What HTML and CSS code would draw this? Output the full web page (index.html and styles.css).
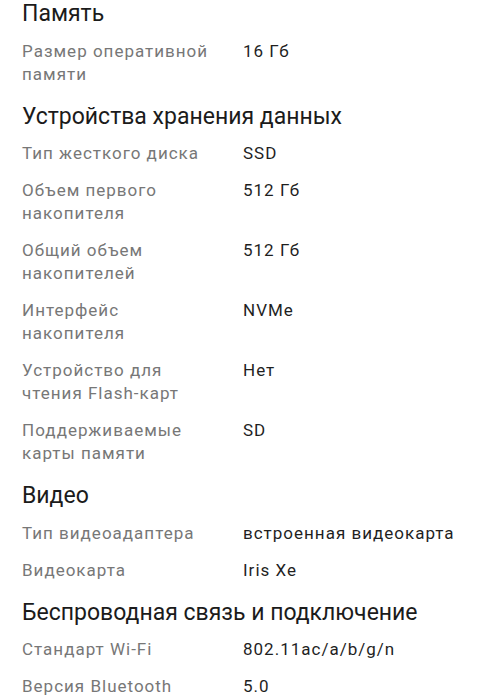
FILE: index.html
```html
<!DOCTYPE html>
<html lang="ru">
<head>
<meta charset="utf-8">
<link rel="stylesheet" href="styles.css">
</head>
<body>
<main class="specs">
  <section class="group">
    <h2 class="group-title">Память</h2>
    <dl class="rows">
      <div class="row"><dt>Размер оперативной памяти</dt><dd>16 Гб</dd></div>
    </dl>
  </section>
  <section class="group">
    <h2 class="group-title">Устройства хранения данных</h2>
    <dl class="rows">
      <div class="row"><dt>Тип жесткого диска</dt><dd>SSD</dd></div>
      <div class="row"><dt>Объем первого накопителя</dt><dd>512 Гб</dd></div>
      <div class="row"><dt>Общий объем накопителей</dt><dd>512 Гб</dd></div>
      <div class="row"><dt>Интерфейс накопителя</dt><dd>NVMe</dd></div>
      <div class="row"><dt>Устройство для чтения Flash-карт</dt><dd>Нет</dd></div>
      <div class="row"><dt>Поддерживаемые карты памяти</dt><dd>SD</dd></div>
    </dl>
  </section>
  <section class="group">
    <h2 class="group-title">Видео</h2>
    <dl class="rows">
      <div class="row"><dt>Тип видеоадаптера</dt><dd>встроенная видеокарта</dd></div>
      <div class="row"><dt>Видеокарта</dt><dd>Iris Xe</dd></div>
    </dl>
  </section>
  <section class="group">
    <h2 class="group-title">Беспроводная связь и подключение</h2>
    <dl class="rows">
      <div class="row"><dt>Стандарт Wi-Fi</dt><dd>802.11ac/a/b/g/n</dd></div>
      <div class="row"><dt>Версия Bluetooth</dt><dd>5.0</dd></div>
    </dl>
  </section>
</main>
</body>
</html>
```
FILE: styles.css
```css
html, body {
  margin: 0;
  padding: 0;
  background: #ffffff;
}
body {
  font-family: Roboto, "Noto Sans", "Liberation Sans", sans-serif;
  -webkit-font-smoothing: antialiased;
}
.specs {
  display: flex;
  flex-direction: column;
  gap: 17px;
  padding: 0 22px;
}
.group-title {
  margin: 0 0 11.5px;
  font-size: 23px;
  line-height: 28px;
  font-weight: 400;
  color: #1b1b1b;
}
.rows {
  margin: 0;
  display: flex;
  flex-direction: column;
  gap: 14px;
}
.row {
  display: grid;
  grid-template-columns: 221px 1fr;
}
.row dt {
  margin: 0;
  font-size: 17px;
  line-height: 23px;
  letter-spacing: 1px;
  color: #777777;
  padding-right: 26px;
}
.row dd {
  margin: 0;
  font-size: 17px;
  line-height: 23px;
  letter-spacing: 1px;
  color: #1f1f1f;
}
```
